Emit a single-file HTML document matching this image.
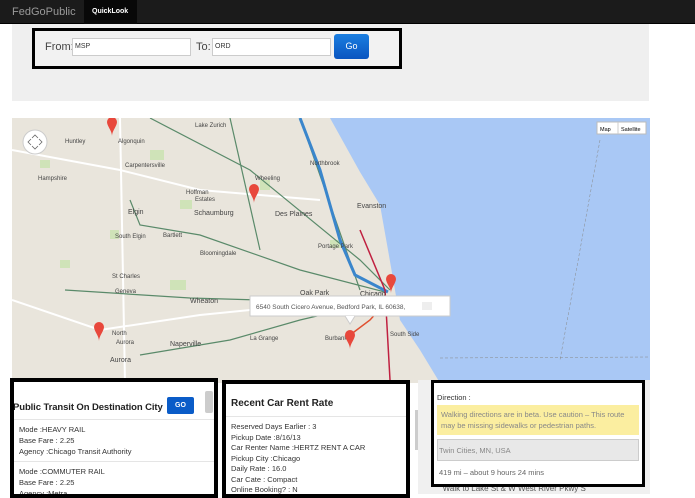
<!DOCTYPE html>
<html><head><meta charset="utf-8"><style>
*{box-sizing:border-box;margin:0;padding:0}
body{width:695px;height:494px;overflow:hidden;background:#fff;font-family:"Liberation Sans",Arial,sans-serif;position:relative}
.nav{position:absolute;left:0;top:0;width:695px;height:24px;background:#1b1b1b;border-bottom:1px solid #000}
.nav .brand{position:absolute;left:12px;top:6px;color:#9a9a9a;font-size:11px}
.nav .ql{position:absolute;left:84px;top:0;width:53px;height:24px;background:#080808;color:#fff;font-size:7px;font-weight:bold;padding:8px 0 0 8px}
.well{position:absolute;left:12px;top:24px;width:637px;height:77px;background:#efefef}
.form{position:absolute;left:32px;top:28px;width:370px;height:41px;border:3px solid #000;background:#f2f2f2}
.lbl{position:absolute;font-size:11px;color:#444;top:10px}
.inp{position:absolute;top:7px;height:18px;background:#fff;border:1px solid #ccc;font-size:7px;color:#333;padding:4px 2px}
.go{position:absolute;left:299px;top:3px;width:35px;height:25px;background:linear-gradient(#1a7ee0,#0a55c0);border-radius:3px;color:#fff;font-size:9px;text-align:center;line-height:25px}
.map{position:absolute;left:12px;top:118px;width:638px;height:265px;overflow:hidden;background:#e9e5dc}
.p{position:absolute;background:#fff;border:4px solid #000;overflow:hidden}
.row{font-size:7.5px;color:#333;line-height:11px;padding:4px 5px;border-bottom:1px solid #e5e5e5}
</style></head><body>
<div class="nav"><div class="brand">FedGoPublic</div><div class="ql">QuickLook</div></div>
<div class="well"></div>
<div class="form">
<div class="lbl" style="left:10px">From:</div><div class="inp" style="left:37px;width:119px">MSP</div>
<div class="lbl" style="left:161px">To:</div><div class="inp" style="left:177px;width:119px">ORD</div>
<div class="go">Go</div></div>
<div class="map">
<svg width="638" height="265" viewBox="12 118 638 265">
<rect x="12" y="118" width="638" height="265" fill="#e9e5dc"/>
<g fill="#cfe3b8"><rect x="40" y="160" width="10" height="8"/><rect x="150" y="150" width="14" height="10"/><rect x="180" y="200" width="12" height="9"/><rect x="60" y="260" width="10" height="8"/><rect x="170" y="280" width="16" height="10"/><rect x="300" y="300" width="14" height="10"/><rect x="260" y="180" width="10" height="10"/><rect x="110" y="230" width="9" height="9"/><rect x="330" y="240" width="12" height="8"/></g>
<path d="M330 118 L360 172 L380 205 L388 250 L395 290 L400 320 L420 350 L440 383 L650 383 L650 118 Z" fill="#a9c8f5"/>
<g fill="none" stroke="#fff" stroke-width="2"><path d="M12 150 L120 170 L200 190 L320 200"/><path d="M12 300 L100 330 L200 315 L350 300"/><path d="M120 118 L125 383"/></g>
<g fill="none" stroke="#5a8a6a" stroke-width="1.2"><path d="M150 118 L250 170 L360 260 L390 290"/><path d="M130 200 L140 225 L200 235 L300 270 L385 292"/><path d="M65 290 L190 298 L260 300"/><path d="M140 355 L230 340 L300 320 L385 300"/><path d="M230 118 L260 250"/><path d="M300 118 L360 290"/></g>
<path d="M300 118 L320 170 L340 240 L355 275 L388 292" fill="none" stroke="#3a86cc" stroke-width="3"/>
<path d="M360 230 L385 290 L390 380" fill="none" stroke="#c02040" stroke-width="1.5"/>
<path d="M388 300 L370 320 L350 335" fill="none" stroke="#e05030" stroke-width="1.5"/>
<path d="M600 140 L560 360 M440 358 L650 357" stroke="#888" stroke-width="0.5" stroke-dasharray="3 2" fill="none"/>
<g font-size="6" fill="#444" font-family="Liberation Sans"><text x="195" y="127">Lake Zurich</text><text x="65" y="143">Huntley</text><text x="118" y="143">Algonquin</text><text x="125" y="167">Carpentersville</text><text x="186" y="194">Hoffman</text><text x="195" y="201">Estates</text><text x="194" y="215" font-size="7">Schaumburg</text><text x="128" y="214" font-size="7">Elgin</text><text x="115" y="238">South Elgin</text><text x="163" y="237">Bartlett</text><text x="200" y="255">Bloomingdale</text><text x="112" y="278">St Charles</text><text x="115" y="293">Geneva</text><text x="190" y="303" font-size="7">Wheaton</text><text x="112" y="335">North</text><text x="116" y="344">Aurora</text><text x="110" y="362" font-size="7">Aurora</text><text x="170" y="346" font-size="7">Naperville</text><text x="275" y="216" font-size="7">Des Plaines</text><text x="357" y="208" font-size="7">Evanston</text><text x="310" y="165">Northbrook</text><text x="360" y="296" font-size="7" fill="#333">Chicago</text><text x="300" y="295" font-size="7">Oak Park</text><text x="325" y="340">Burbank</text><text x="390" y="336">South Side</text><text x="38" y="180">Hampshire</text><text x="255" y="180">Wheeling</text><text x="318" y="248">Portage Park</text><text x="250" y="340">La Grange</text></g>
<g fill="#e8483c"><path d="M107 122 a5 5 0 0 1 10 0 c0 4 -5 9 -5 14 c0 -5 -5 -10 -5 -14z"/><path d="M249 189 a5 5 0 0 1 10 0 c0 4 -5 9 -5 14 c0 -5 -5 -10 -5 -14z"/><path d="M94 327 a5 5 0 0 1 10 0 c0 4 -5 9 -5 14 c0 -5 -5 -10 -5 -14z"/><path d="M345 335 a5 5 0 0 1 10 0 c0 4 -5 9 -5 14 c0 -5 -5 -10 -5 -14z"/><path d="M386 279 a5 5 0 0 1 10 0 c0 4 -5 9 -5 14 c0 -5 -5 -10 -5 -14z"/></g>
<circle cx="35" cy="142" r="12" fill="#fff" stroke="#ccc"/>
<path d="M32 138 l3 -3 l3 3 M32 146 l3 3 l3 -3 M31 139 l-3 3 l3 3 M39 139 l3 3 l-3 3" stroke="#666" fill="none" stroke-width="0.8"/>
<rect x="250" y="296" width="200" height="20" fill="#fff" stroke="#ccc"/>
<path d="M345 316 l5 8 l5 -8" fill="#fff" stroke="#ccc"/>
<text x="256" y="309" font-size="6.5" fill="#555" font-family="Liberation Sans">6540 South Cicero Avenue, Bedford Park, IL 60638,</text>
<rect x="422" y="302" width="10" height="8" fill="#eee"/>
<rect x="597" y="122" width="49" height="12" fill="#fff" stroke="#bbb"/><line x1="618" y1="122" x2="618" y2="134" stroke="#ccc"/>
<text x="600" y="131" font-size="5.5" font-family="Liberation Sans">Map</text><text x="621" y="131" font-size="5.5" font-family="Liberation Sans">Satellite</text>
</svg></div>
<div class="p" style="left:10px;top:378px;width:208px;height:120px">
<div style="height:38px;position:relative;border-bottom:1px solid #e5e5e5"><div style="position:absolute;left:-1px;top:20px;font-size:9.5px;font-weight:bold;color:#222;white-space:nowrap;letter-spacing:-0.1px">Public Transit On Destination City</div><div style="position:absolute;left:153px;top:15px;width:27px;height:17px;background:#0a5cc8;color:#fff;font-size:7px;font-weight:bold;text-align:center;line-height:17px;border-radius:2px">GO</div><div style="position:absolute;left:191px;top:9px;width:8px;height:22px;background:#ccc;border-radius:2px"></div></div>
<div class="row">Mode :HEAVY RAIL<br>Base Fare : 2.25<br>Agency :Chicago Transit Authority</div>
<div class="row">Mode :COMMUTER RAIL<br>Base Fare : 2.25<br>Agency :Metra</div></div>
<div class="p" style="left:222px;top:380px;width:188px;height:118px">
<div style="height:33px;font-size:10px;font-weight:bold;color:#222;padding:14px 0 0 5px;border-bottom:1px solid #e5e5e5">Recent Car Rent Rate</div>
<div class="row" style="line-height:10.5px;padding-top:5px">Reserved Days Earlier : 3<br>Pickup Date :8/16/13<br>Car Renter Name :HERTZ RENT A CAR<br>Pickup City :Chicago<br>Daily Rate : 16.0<br>Car Cate : Compact<br>Online Booking? : N</div></div>
<div style="position:absolute;left:418px;top:380px;width:232px;height:114px;background:#f0f0f0"></div>
<div style="position:absolute;left:415px;top:410px;width:3px;height:40px;background:#ccc"></div>
<div style="position:absolute;left:436px;top:484px;font-size:8px;color:#555">&nbsp;&nbsp;&nbsp;Walk to Lake St &amp; W West River Pkwy S</div>
<div class="p" style="left:431px;top:380px;width:214px;height:107px;border-width:3px">
<div style="font-size:7.5px;color:#333;padding:10px 0 0 3px">Direction :</div>
<div style="margin:3px 3px 0;background:#fbeea0;font-size:7.5px;color:#888;padding:4px 4px;line-height:11px;height:30px">Walking directions are in beta. Use caution – This route may be missing sidewalks or pedestrian paths.</div>
<div style="margin:4px 3px 0;background:#e8e8e8;border:1px solid #ccc;font-size:7.5px;color:#888;padding:6px 1px;height:22px">Twin Cities, MN, USA</div>
<div style="font-size:7.5px;color:#666;padding:7px 5px">419 mi – about 9 hours 24 mins</div></div>
</body></html>
